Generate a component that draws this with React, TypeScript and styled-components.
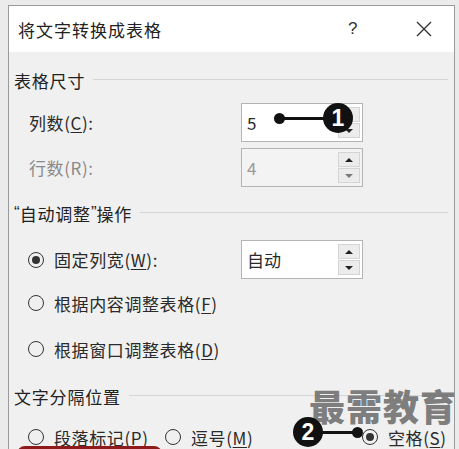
import React from "react";
import styled, { createGlobalStyle } from "styled-components";

const GlobalStyle = createGlobalStyle`
  html, body { margin: 0; padding: 0; background: #ebebeb; }
  body { font-family: "Noto Sans CJK SC", "Noto Sans", sans-serif; }
`;

const Page = styled.div`
  position: relative;
  width: 459px;
  height: 449px;
  overflow: hidden;
  padding: 5px 4px 0 8px;
  box-sizing: border-box;
  background: #ebebeb;
`;

const Dialog = styled.div`
  border: 1px solid #9a9a9a;
  border-bottom: none;
  height: 480px;
  background: #f0f0f0;
  display: flex;
  flex-direction: column;
`;

const TitleBar = styled.div`
  height: 46px;
  background: #ffffff;
  display: flex;
  align-items: center;
  padding-left: 9px;
  flex-shrink: 0;
`;

const Title = styled.div`
  font-size: 17px;
  letter-spacing: 1px;
  color: #222;
  flex: 1;
`;

const Help = styled.div`
  font-size: 17px;
  color: #333;
  width: 14px;
  margin-right: 54px;
  font-family: "Liberation Sans", sans-serif;
`;

const CloseBtn = styled.div`
  width: 16px;
  height: 16px;
  margin-right: 22px;
  display: flex;
`;

const Body = styled.div`
  display: flex;
  flex-direction: column;
`;

const SectionHeader = styled.div<{ $mt: number }>`
  display: flex;
  align-items: center;
  height: 24px;
  margin-top: ${(p) => p.$mt}px;
  padding: 0 6px 0 5px;
  font-size: 17px;
  letter-spacing: 0.8px;
  color: #222;
`;

const Quote = styled.span`
  font-family: "Liberation Sans", sans-serif;
  letter-spacing: 0;
`;

const HeaderLine = styled.div`
  flex: 1;
  height: 1px;
  background: #d5d5d5;
  margin-left: 8px;
  margin-top: -2px;
`;

const Row = styled.div<{ $mt: number; $h: number }>`
  display: flex;
  align-items: center;
  height: ${(p) => p.$h}px;
  margin-top: ${(p) => p.$mt}px;
  padding-left: 20px;
`;

const Label = styled.div<{ $disabled?: boolean; $w?: number }>`
  font-size: 17px;
  letter-spacing: 0.6px;
  color: ${(p) => (p.$disabled ? "#8a8a8a" : "#2a2a2a")};
  width: ${(p) => (p.$w ? `${p.$w}px` : "auto")};
  flex-shrink: 0;
  white-space: nowrap;
`;

const Key = styled.span<{ $u?: boolean }>`
  text-decoration: ${(p) => (p.$u ? "underline" : "none")};
  text-underline-offset: 2px;
`;

const SpinBox = styled.div<{ $disabled?: boolean }>`
  width: 122px;
  height: 39px;
  box-sizing: border-box;
  border: 1px solid #b4b4b4;
  background: ${(p) => (p.$disabled ? "#f3f3f3" : "#ffffff")};
  display: flex;
  align-items: center;
  padding: 0 2px 0 5px;
`;

const SpinValue = styled.div<{ $disabled?: boolean }>`
  flex: 1;
  font-size: 17px;
  color: ${(p) => (p.$disabled ? "#9a9a9a" : "#2a2a2a")};
`;

const SpinButtons = styled.div`
  width: 22px;
  height: 31px;
  display: flex;
  flex-direction: column;
  gap: 1px;
`;

const SpinButton = styled.div`
  flex: 1;
  background: #ececec;
  border: 1px solid #d4d4d4;
  display: flex;
  align-items: center;
  justify-content: center;
`;

const Arrow = styled.div<{ $down?: boolean; $disabled?: boolean }>`
  width: 0;
  height: 0;
  border-left: 4px solid transparent;
  border-right: 4px solid transparent;
  ${(p) =>
    p.$down
      ? `border-top: 4px solid ${p.$disabled ? "#7a7a7a" : "#222"};`
      : `border-bottom: 4px solid #222;`}
`;

const Radio = styled.div<{ $checked?: boolean }>`
  width: 16px;
  height: 16px;
  box-sizing: border-box;
  border: 1.8px solid #333;
  border-radius: 50%;
  flex-shrink: 0;
  margin-right: 10px;
  margin-left: -1px;
  display: flex;
  align-items: center;
  justify-content: center;
  &::after {
    content: "";
    display: ${(p) => (p.$checked ? "block" : "none")};
    width: 8px;
    height: 8px;
    border-radius: 50%;
    background: #333;
  }
`;

const RadioItem = styled.div<{ $w?: number }>`
  display: flex;
  align-items: center;
  width: ${(p) => (p.$w ? `${p.$w}px` : "auto")};
  flex-shrink: 0;
`;

const Watermark = styled.div`
  position: absolute;
  left: 309px;
  top: 387px;
  font-size: 36px;
  font-weight: 900;
  letter-spacing: 1px;
  color: rgba(105, 105, 105, 0.85);
  line-height: 1;
  pointer-events: none;
`;

const Callout = styled.div<{ $x: number; $y: number }>`
  position: absolute;
  left: ${(p) => p.$x - 15}px;
  top: ${(p) => p.$y - 15}px;
  width: 30px;
  height: 30px;
  border-radius: 50%;
  background: #111;
  color: #fff;
  font-family: "Liberation Sans", sans-serif;
  font-weight: 700;
  font-size: 23px;
  display: flex;
  align-items: center;
  justify-content: center;
`;

const Leader = styled.div<{ $x1: number; $x2: number; $y: number }>`
  position: absolute;
  left: ${(p) => p.$x1}px;
  width: ${(p) => p.$x2 - p.$x1}px;
  top: ${(p) => p.$y - 1.5}px;
  height: 3px;
  background: #111;
`;

const Dot = styled.div<{ $x: number; $y: number }>`
  position: absolute;
  left: ${(p) => p.$x - 5.5}px;
  top: ${(p) => p.$y - 5.5}px;
  width: 11px;
  height: 11px;
  border-radius: 50%;
  background: #111;
`;

const RedMark = styled.div`
  position: absolute;
  left: 17px;
  top: 446px;
  width: 145px;
  height: 14px;
  border-radius: 8px 8px 0 0;
  background: #8e1b1b;
`;

function Spin({ value, disabled }: { value: string; disabled?: boolean }) {
  return (
    <SpinBox $disabled={disabled}>
      <SpinValue $disabled={disabled}>{value}</SpinValue>
      <SpinButtons>
        <SpinButton>
          <Arrow />
        </SpinButton>
        <SpinButton>
          <Arrow $down $disabled={disabled} />
        </SpinButton>
      </SpinButtons>
    </SpinBox>
  );
}

export default function App() {
  return (
    <>
      <GlobalStyle />
      <Page>
        <Dialog>
          <TitleBar>
            <Title>将文字转换成表格</Title>
            <Help>?</Help>
            <CloseBtn>
              <svg width="16" height="16" viewBox="0 0 16 16">
                <path d="M1 1 L15 15 M15 1 L1 15" stroke="#333" strokeWidth="1.4" fill="none" />
              </svg>
            </CloseBtn>
          </TitleBar>
          <Body>
            <SectionHeader $mt={16}>
              表格尺寸
              <HeaderLine />
            </SectionHeader>
            <Row $mt={11} $h={39}>
              <Label $w={212}>
                列数(<Key $u>C</Key>):
              </Label>
              <Spin value="5" />
            </Row>
            <Row $mt={6} $h={39}>
              <Label $w={212} $disabled>
                行数(R):
              </Label>
              <Spin value="4" disabled />
            </Row>
            <SectionHeader $mt={14}>
              <Quote>“</Quote>自动调整<Quote>”</Quote>操作
              <HeaderLine />
            </SectionHeader>
            <Row $mt={15} $h={39}>
              <RadioItem $w={212}>
                <Radio $checked />
                <Label>
                  固定列宽(<Key $u>W</Key>):
                </Label>
              </RadioItem>
              <Spin value="自动" />
            </Row>
            <Row $mt={9} $h={30}>
              <RadioItem>
                <Radio />
                <Label>
                  根据内容调整表格(<Key $u>F</Key>)
                </Label>
              </RadioItem>
            </Row>
            <Row $mt={16} $h={30}>
              <RadioItem>
                <Radio />
                <Label>
                  根据窗口调整表格(<Key $u>D</Key>)
                </Label>
              </RadioItem>
            </Row>
            <SectionHeader $mt={20}>
              文字分隔位置
              <HeaderLine />
            </SectionHeader>
            <Row $mt={14} $h={30}>
              <RadioItem $w={137}>
                <Radio />
                <Label>
                  段落标记(<Key $u>P</Key>)
                </Label>
              </RadioItem>
              <RadioItem $w={197}>
                <Radio />
                <Label>
                  逗号(<Key $u>M</Key>)
                </Label>
              </RadioItem>
              <RadioItem>
                <Radio $checked />
                <Label>
                  空格(<Key $u>S</Key>)
                </Label>
              </RadioItem>
            </Row>
          </Body>
        </Dialog>
        <Watermark>最需教育</Watermark>
        <Leader $x1={279} $x2={330} $y={118} />
        <Dot $x={279} $y={118} />
        <Callout $x={338} $y={118}>1</Callout>
        <Leader $x1={310} $x2={357} $y={432} />
        <Dot $x={357} $y={432} />
        <Callout $x={308} $y={432}>2</Callout>
        <RedMark />
      </Page>
    </>
  );
}
